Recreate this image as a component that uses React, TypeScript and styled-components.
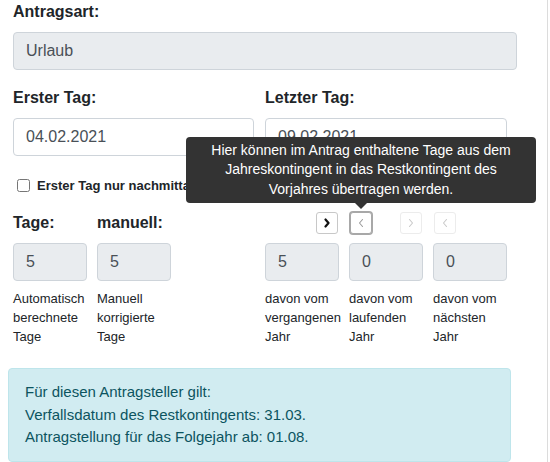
import React from 'react';
import styled, { createGlobalStyle, css } from 'styled-components';

const GlobalStyle = createGlobalStyle`
  html, body {
    margin: 0;
    padding: 0;
    background: #fff;
  }
  body {
    font-family: "Liberation Sans", Arial, sans-serif;
    color: #212529;
  }
`;

const ChevronRight = ({ color, width }: { color: string; width: number }) => (
  <svg width="8" height="10" viewBox="0 0 8 10">
    <path d="M2.5 1.5 L5.5 5 L2.5 8.5" fill="none" stroke={color} strokeWidth={width} strokeLinecap="round" strokeLinejoin="round" />
  </svg>
);

const ChevronLeft = ({ color, width }: { color: string; width: number }) => (
  <svg width="8" height="10" viewBox="0 0 8 10">
    <path d="M5.5 1.5 L2.5 5 L5.5 8.5" fill="none" stroke={color} strokeWidth={width} strokeLinecap="round" strokeLinejoin="round" />
  </svg>
);

const App = () => {
  return (
    <>
      <GlobalStyle />
      <S.Page>
        <S.Form>
          <S.Label>Antragsart:</S.Label>
          <S.Input $readonly $wide>Urlaub</S.Input>

          <S.TwoCols>
            <div>
              <S.Label>Erster Tag:</S.Label>
              <S.Input>04.02.2021</S.Input>
            </div>
            <div>
              <S.Label>Letzter Tag:</S.Label>
              <S.Input>09.02.2021</S.Input>
            </div>
          </S.TwoCols>

          <S.CheckRow>
            <S.Check type="checkbox" />
            <S.CheckLabel>Erster Tag nur nachmittags</S.CheckLabel>
          </S.CheckRow>

          <S.DaysRow>
            <S.Group>
              <S.Field>
                <S.Label>Tage:</S.Label>
                <S.Input $readonly $small>5</S.Input>
                <S.Caption>Automatisch berechnete Tage</S.Caption>
              </S.Field>
              <S.Field>
                <S.Label>manuell:</S.Label>
                <S.Input $readonly $small>5</S.Input>
                <S.Caption>Manuell korrigierte Tage</S.Caption>
              </S.Field>
            </S.Group>

            <S.RightGroup>
              <S.ButtonRow>
                <S.Pair>
                  <S.ArrowButton>
                    <ChevronRight color="#111" width={2.2} />
                  </S.ArrowButton>
                  <S.ArrowButton $focused>
                    <ChevronLeft color="#9a9a9a" width={1.1} />
                    <S.Tooltip>
                      Hier können im Antrag enthaltene Tage aus dem Jahreskontingent in das
                      Restkontingent des Vorjahres übertragen werden.
                    </S.Tooltip>
                  </S.ArrowButton>
                </S.Pair>
                <S.Pair>
                  <S.ArrowButton $disabled>
                    <ChevronRight color="#c9c9c9" width={1.1} />
                  </S.ArrowButton>
                  <S.ArrowButton $disabled>
                    <ChevronLeft color="#c9c9c9" width={1.1} />
                  </S.ArrowButton>
                </S.Pair>
              </S.ButtonRow>
              <S.Group>
                <S.Field>
                  <S.Input $readonly $small>5</S.Input>
                  <S.Caption>davon vom vergangenen Jahr</S.Caption>
                </S.Field>
                <S.Field>
                  <S.Input $readonly $small>0</S.Input>
                  <S.Caption>davon vom laufenden Jahr</S.Caption>
                </S.Field>
                <S.Field>
                  <S.Input $readonly $small>0</S.Input>
                  <S.Caption>davon vom nächsten Jahr</S.Caption>
                </S.Field>
              </S.Group>
            </S.RightGroup>
          </S.DaysRow>
        </S.Form>

        <S.InfoBox>
          <div>Für diesen Antragsteller gilt:</div>
          <div>Verfallsdatum des Restkontingents: 31.03.</div>
          <div>Antragstellung für das Folgejahr ab: 01.08.</div>
        </S.InfoBox>
      </S.Page>
    </>
  );
};

export default App;

interface InputProps {
  $readonly?: boolean;
  $wide?: boolean;
  $small?: boolean;
}
interface ButtonProps {
  $focused?: boolean;
  $disabled?: boolean;
}

const S = {
  Page: styled.div`
    position: relative;
    box-sizing: border-box;
    width: 548px;
    height: 462px;
    overflow: hidden;
    padding: 0 8px;
    border-right: 1px solid #dcdcdc;
  `,
  Form: styled.div`
    padding: 0 5px;
  `,
  Label: styled.div`
    font-size: 16px;
    line-height: 24px;
    font-weight: 700;
    color: #212529;
    margin-bottom: 8px;
  `,
  Input: styled.div<InputProps>`
    box-sizing: border-box;
    height: 38px;
    padding: 0 12px;
    display: flex;
    align-items: center;
    font-size: 16px;
    color: #495057;
    background: #fff;
    border: 1px solid #ced4da;
    border-radius: 4px;
    ${(props) =>
      props.$readonly &&
      css`
        background: #e9ecef;
      `}
    ${(props) =>
      props.$wide &&
      css`
        width: 504px;
        margin-bottom: 16px;
      `}
    ${(props) =>
      props.$small &&
      css`
        width: 74px;
      `}
  `,
  TwoCols: styled.div`
    display: grid;
    grid-template-columns: 241px 242px;
    column-gap: 11px;
  `,
  CheckRow: styled.div`
    display: flex;
    align-items: center;
    height: 20px;
    margin-top: 19px;
  `,
  Check: styled.input`
    width: 13px;
    height: 13px;
    margin: 0 7px 0 4px;
  `,
  CheckLabel: styled.span`
    font-size: 13px;
    font-weight: 700;
    color: #212529;
  `,
  DaysRow: styled.div`
    display: flex;
    justify-content: space-between;
    width: 494px;
    margin-top: 16px;
  `,
  Group: styled.div`
    display: flex;
    gap: 10px;
  `,
  Field: styled.div`
    width: 74px;
  `,
  Caption: styled.div`
    margin-top: 8px;
    font-size: 13px;
    line-height: 19px;
    color: #212529;
  `,
  RightGroup: styled.div`
    width: 242px;
  `,
  ButtonRow: styled.div`
    display: flex;
    align-items: center;
    gap: 28px;
    height: 24px;
    padding-left: 51px;
    margin-bottom: 8px;
  `,
  Pair: styled.div`
    display: flex;
    gap: 12px;
  `,
  ArrowButton: styled.div<ButtonProps>`
    position: relative;
    box-sizing: border-box;
    width: 22px;
    height: 22px;
    display: flex;
    align-items: center;
    justify-content: center;
    background: #fff;
    border: 1px solid #c8c8c8;
    border-radius: 3px;
    ${(props) =>
      props.$focused &&
      css`
        border-color: #a8a8a8;
        box-shadow: 0 0 0 1px #a8a8a8;
      `}
    ${(props) =>
      props.$disabled &&
      css`
        border-color: #ececec;
      `}
  `,
  Tooltip: styled.div`
    position: absolute;
    bottom: calc(100% + 10px);
    left: 50%;
    transform: translateX(-50%);
    z-index: 10;
    box-sizing: border-box;
    width: 350px;
    padding: 4px 10px;
    background: #333;
    color: #fff;
    border-radius: 4px;
    font-size: 14px;
    line-height: 19.5px;
    text-align: center;
    &::after {
      content: '';
      position: absolute;
      top: 100%;
      left: 50%;
      margin-left: -6px;
      border-width: 6px 6px 0;
      border-style: solid;
      border-color: #333 transparent transparent;
    }
  `,
  InfoBox: styled.div`
    box-sizing: border-box;
    width: 503px;
    margin-top: 22px;
    padding: 12px 16px;
    background: #d1ecf1;
    border: 1px solid #bee5eb;
    border-radius: 4px;
    color: #0c5460;
    font-size: 15px;
    line-height: 22.5px;
  `
};
